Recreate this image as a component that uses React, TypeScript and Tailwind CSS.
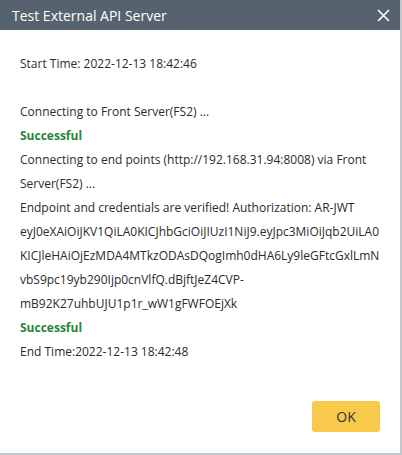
import React from 'react'

const TOKEN =
  'eyJ0eXAiOiJKV1QiLA0KICJhbGciOiJIUzI1NiJ9.eyJpc3MiOiJqb2UiLA0KICJleHAiOjEzMDA4MTkzODAsDQogImh0dHA6Ly9leGFtcGxlLmNvbS9pc19yb290Ijp0cnVlfQ.dBjftJeZ4CVP-mB92K27uhbUJU1p1r_wW1gFWFOEjXk'

export default function App() {
  return (
    <div className="h-[455px] w-[402px] bg-[#c3c8cd] font-['Open_Sans',sans-serif]">
      <div className="flex h-[453px] w-[400px] flex-col bg-white">
        <div className="flex h-[30px] items-center justify-between bg-[#56636f] pl-3 pr-[10px]">
          <span className="text-[14px] text-white">Test External API Server</span>
          <button className="text-white">
            <svg width="13" height="13" viewBox="0 0 13 13" fill="none" stroke="currentColor" strokeWidth="1.6">
              <path d="M1 1L12 12M12 1L1 12" />
            </svg>
          </button>
        </div>
        <div className="flex-1 px-5 pt-[22px] text-[12px] leading-[24px] text-[#2b2b2b]">
          <div>Start Time: 2022-12-13 18:42:46</div>
          <div>&nbsp;</div>
          <div>Connecting to Front Server(FS2) ...</div>
          <div className="font-bold text-[#26873a]">Successful</div>
          <div>Connecting to end points (http://192.168.31.94:8008) via Front Server(FS2) ...</div>
          <div className="[overflow-wrap:anywhere]">
            Endpoint and credentials are verified! Authorization: AR-JWT {TOKEN}
          </div>
          <div className="font-bold text-[#26873a]">Successful</div>
          <div>End Time:2022-12-13 18:42:48</div>
        </div>
        <div className="flex justify-end px-5 pb-[21px]">
          <button className="h-[31px] w-[68px] rounded-[3px] bg-[#f9c94c] text-[14px] text-[#333]">OK</button>
        </div>
      </div>
    </div>
  )
}
